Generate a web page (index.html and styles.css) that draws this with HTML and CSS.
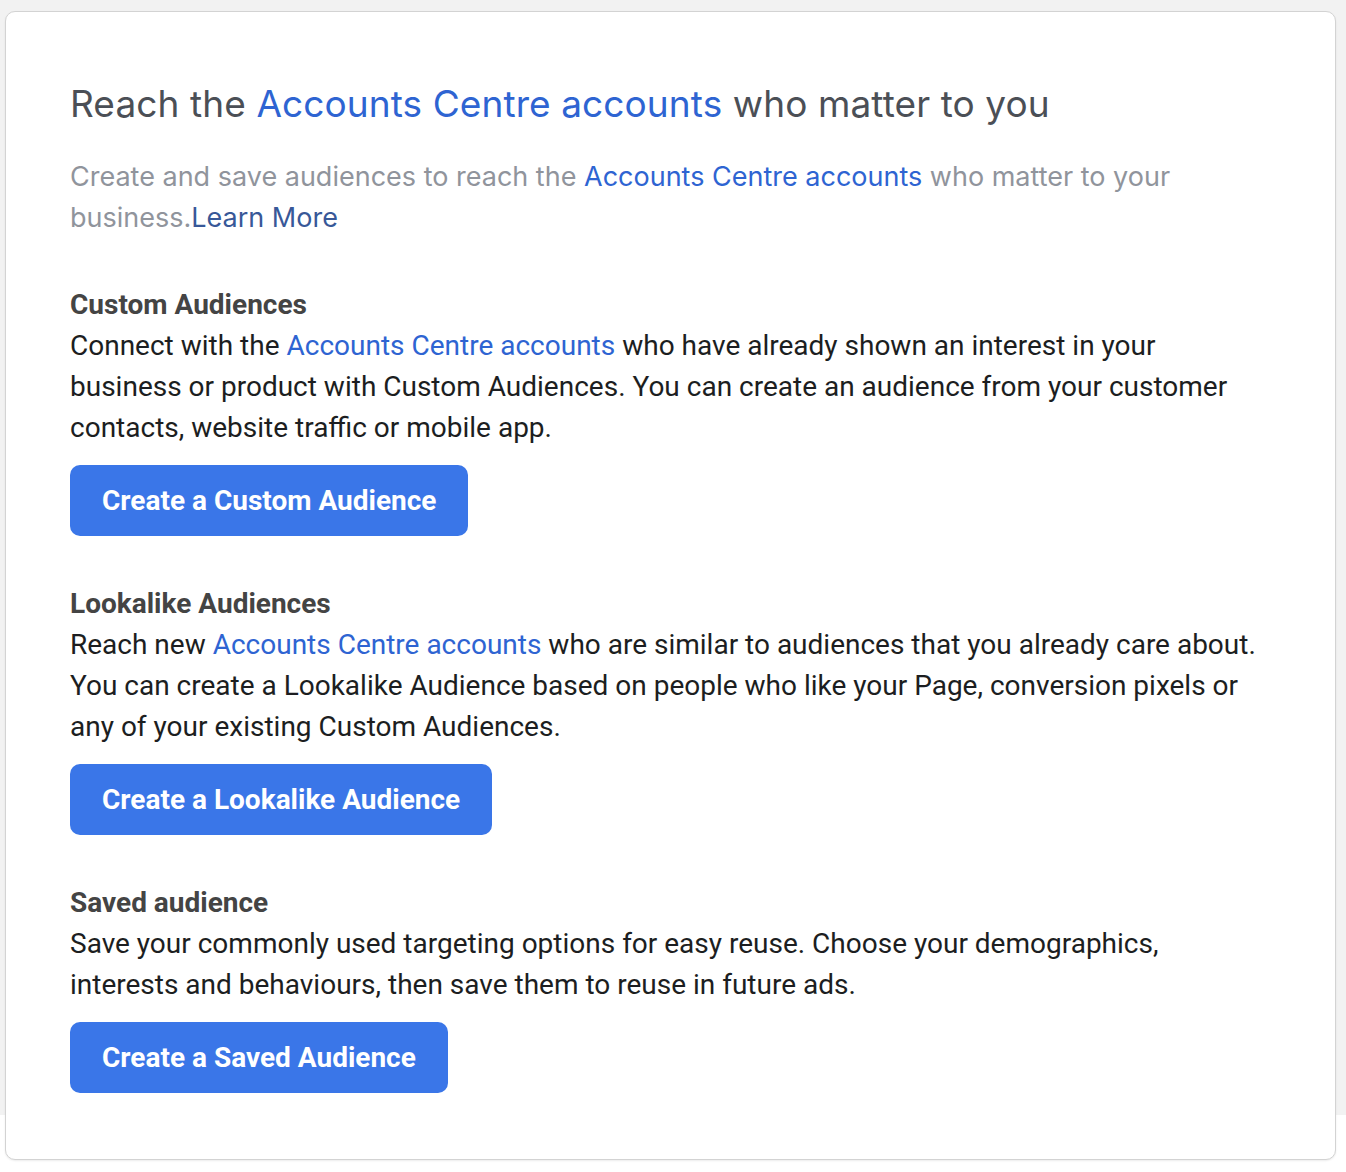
FILE: index.html
```html
<!DOCTYPE html>
<html lang="en">
  <head>
    <meta charset="utf-8">
    <title>Audiences</title>
    <link rel="stylesheet" href="styles.css">
  </head>
  <body>
    <div class="page">
      <div class="card">
        <h1 class="title">Reach the <a class="link" href="#">Accounts Centre accounts</a> who matter to you</h1>
        <p class="lead">Create and save audiences to reach the <a class="link" href="#">Accounts Centre accounts</a> who matter to your business.<a class="more" href="#">Learn More</a></p>

        <div class="section">
          <h2 class="section-title">Custom Audiences</h2>
          <p class="section-text">Connect with the <a class="link" href="#">Accounts Centre accounts</a> who have already shown an interest in your business or product with Custom Audiences. You can create an audience from your customer contacts, website traffic or mobile app.</p>
          <button class="btn">Create a Custom Audience</button>
        </div>

        <div class="section">
          <h2 class="section-title">Lookalike Audiences</h2>
          <p class="section-text">Reach new <a class="link" href="#">Accounts Centre accounts</a> who are similar to audiences that you already care about. You can create a Lookalike Audience based on people who like your Page, conversion pixels or any of your existing Custom Audiences.</p>
          <button class="btn">Create a Lookalike Audience</button>
        </div>

        <div class="section">
          <h2 class="section-title">Saved audience</h2>
          <p class="section-text">Save your commonly used targeting options for easy reuse. Choose your demographics, interests and behaviours, then save them to reuse in future ads.</p>
          <button class="btn">Create a Saved Audience</button>
        </div>
      </div>
    </div>
  </body>
</html>
```

FILE: styles.css
```css
* {
  margin: 0;
  padding: 0;
  box-sizing: border-box;
}
html {
  background: #fff;
}
body {
  min-height: 1172px;
  background: linear-gradient(#f2f2f2, #f2f2f2) no-repeat;
  background-size: 100% 1115px;
  font-family: Roboto, "Liberation Sans", sans-serif;
}
.page {
  padding: 11px 10px 0 5px;
}
.card {
  background: #fff;
  border: 1px solid #d3d3d3;
  border-radius: 10px;
  box-shadow: 0 1px 2px rgba(0, 0, 0, 0.08);
  height: 1149px;
  padding: 68px 64px 0 64px;
}
.title {
  font-family: Inter, Roboto, sans-serif;
  font-size: 37px;
  font-weight: 400;
  line-height: 48px;
  letter-spacing: 0.1px;
  color: #4b4f56;
}
.link {
  color: #2e64d2;
  text-decoration: none;
}
.lead {
  margin-top: 28px;
  font-family: Inter, Roboto, sans-serif;
  font-size: 27px;
  line-height: 41px;
  color: #90949c;
}
.more {
  color: #385898;
  text-decoration: none;
}
.section {
  margin-top: 46px;
}
.section + .section {
  margin-top: 47px;
}
.section-title {
  font-size: 28px;
  font-weight: 700;
  line-height: 41px;
  color: #444;
}
.section-text {
  font-size: 28px;
  line-height: 41px;
  color: #1c1e21;
}
.btn {
  display: block;
  margin-top: 17px;
  height: 71px;
  padding: 0 32px;
  border: none;
  border-radius: 10px;
  background: #3a76e8;
  color: #fff;
  font-family: Roboto, "Liberation Sans", sans-serif;
  font-size: 28px;
  font-weight: 700;
}
```
